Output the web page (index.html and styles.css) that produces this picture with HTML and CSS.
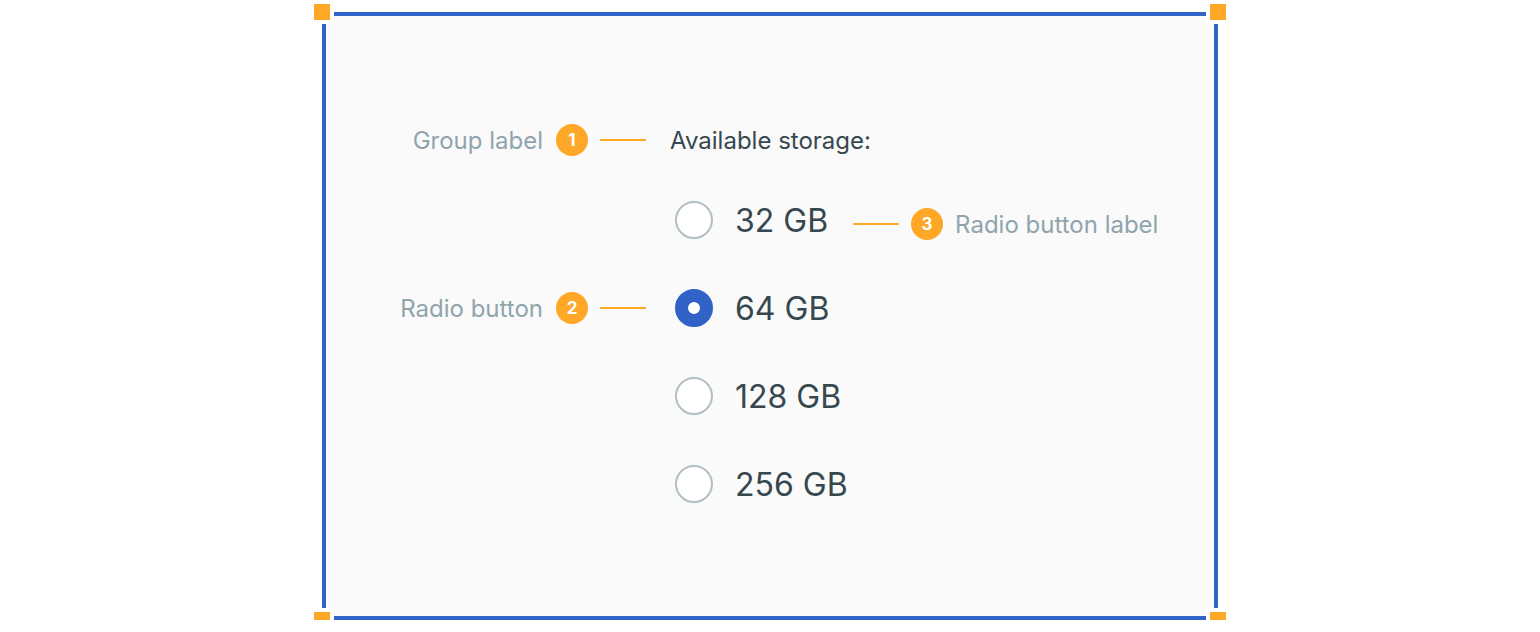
FILE: index.html
```html
<!DOCTYPE html>
<html>
<head>
    <title>Radio group anatomy</title>
    <link rel="stylesheet" href="styles.css">
</head>
<body>
    <div class="frame">
        <span class="handle handle-tl"></span>
        <span class="handle handle-tr"></span>
        <span class="handle handle-bl"></span>
        <span class="handle handle-br"></span>

        <div class="anatomy">
            <div class="note note-left">
                <span class="note-text">Group label</span>
                <span class="badge">1</span>
                <span class="leader"></span>
            </div>
            <div class="group-label">Available storage:</div>

            <div class="note note-left"></div>
            <div class="option">
                <span class="radio"></span>
                <span class="option-label">32 GB</span>
                <div class="note note-right">
                    <span class="leader"></span>
                    <span class="badge">3</span>
                    <span class="note-text">Radio button label</span>
                </div>
            </div>

            <div class="note note-left">
                <span class="note-text">Radio button</span>
                <span class="badge">2</span>
                <span class="leader"></span>
            </div>
            <div class="option">
                <span class="radio checked"></span>
                <span class="option-label">64 GB</span>
            </div>

            <div class="note note-left"></div>
            <div class="option">
                <span class="radio"></span>
                <span class="option-label">128 GB</span>
            </div>

            <div class="note note-left"></div>
            <div class="option">
                <span class="radio"></span>
                <span class="option-label">256 GB</span>
            </div>
        </div>
    </div>
</body>
</html>
```

FILE: styles.css
```css
body {
    margin: 0;
    background: #ffffff;
    font-family: Inter, "Noto Sans", sans-serif;
}

.frame {
    position: relative;
    box-sizing: border-box;
    width: 896px;
    height: 608px;
    margin: 12px auto 0;
    border: 4px solid #3062c8;
    background: #fafafa;
}

.handle {
    position: absolute;
    width: 16px;
    height: 16px;
    background: #ffa726;
    border: 4px solid #ffffff;
}

.handle-tl { left: -16px; top: -16px; }
.handle-tr { right: -16px; top: -16px; }
.handle-bl { left: -16px; bottom: -16px; }
.handle-br { right: -16px; bottom: -16px; }

.anatomy {
    display: grid;
    grid-template-columns: 320px 1fr;
    grid-template-rows: 56px repeat(4, 88px);
    column-gap: 24px;
    padding-top: 104px;
}

.anatomy > .group-label,
.anatomy > .note-left:first-child {
    margin-bottom: 16px;
}

.note {
    display: flex;
    align-items: center;
    gap: 12px;
}

.note-left {
    justify-content: flex-end;
}

.note-text {
    font-size: 24px;
    color: #90a4ae;
    margin-right: 1px;
}

.note-right .note-text {
    margin-right: 0;
}

.badge {
    display: flex;
    align-items: center;
    justify-content: center;
    width: 32px;
    height: 32px;
    border-radius: 50%;
    background: #ffa726;
    color: #ffffff;
    font-size: 17px;
    font-weight: 700;
}

.leader {
    width: 46px;
    height: 2px;
    background: #ffa726;
}

.group-label {
    display: flex;
    align-items: center;
    font-size: 24px;
    color: #37474f;
}

.option {
    display: flex;
    align-items: center;
}

.radio {
    box-sizing: border-box;
    width: 38px;
    height: 38px;
    margin-left: 5px;
    border: 2px solid #b0bec5;
    border-radius: 50%;
    background: #ffffff;
}

.radio.checked {
    border: 13px solid #3062c8;
}

.option-label {
    margin-left: 22px;
    font-size: 32px;
    color: #37474f;
}

.option .note-right {
    margin-left: 25px;
    margin-top: 8px;
}
```
